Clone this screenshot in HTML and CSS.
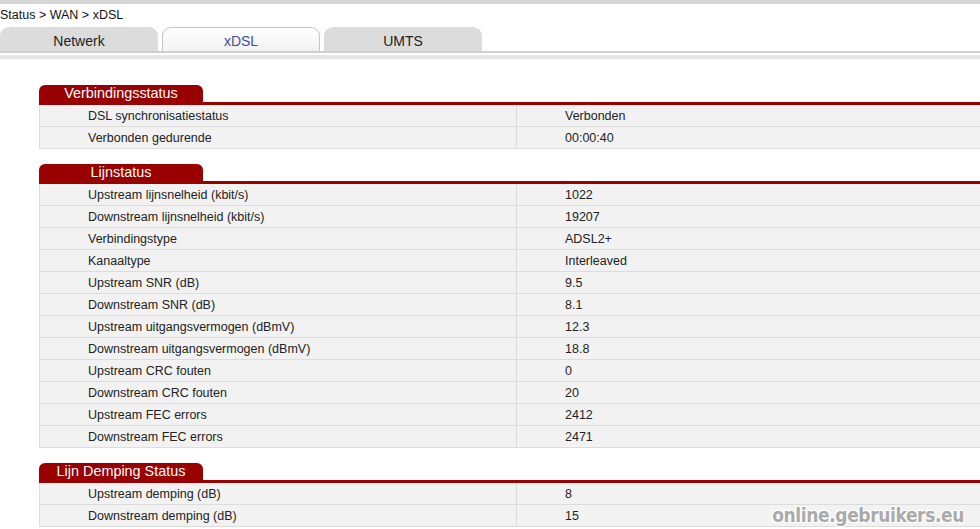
FILE: index.html
```html
<!DOCTYPE html>
<html lang="nl">

<head>
    <meta charset="UTF-8">
    <title>Status - WAN - xDSL</title>
    <link rel="stylesheet" href="styles.css">
</head>

<body>
    <div class="topbar"></div>
    <div class="breadcrumb">Status &gt; WAN &gt; xDSL</div>

    <div class="tabs">
        <div class="tab">Netwerk</div>
        <div class="tab active">xDSL</div>
        <div class="tab">UMTS</div>
    </div>
    <div class="tabline"></div>

    <div class="content">
        <div class="section">
            <div class="section-head"><span class="section-title">Verbindingsstatus</span></div>
            <table class="info">
                <tr><td>DSL synchronisatiestatus</td><td>Verbonden</td></tr>
                <tr><td>Verbonden gedurende</td><td>00:00:40</td></tr>
            </table>
        </div>

        <div class="section">
            <div class="section-head"><span class="section-title">Lijnstatus</span></div>
            <table class="info">
                <tr><td>Upstream lijnsnelheid (kbit/s)</td><td>1022</td></tr>
                <tr><td>Downstream lijnsnelheid (kbit/s)</td><td>19207</td></tr>
                <tr><td>Verbindingstype</td><td>ADSL2+</td></tr>
                <tr><td>Kanaaltype</td><td>Interleaved</td></tr>
                <tr><td>Upstream SNR (dB)</td><td>9.5</td></tr>
                <tr><td>Downstream SNR (dB)</td><td>8.1</td></tr>
                <tr><td>Upstream uitgangsvermogen (dBmV)</td><td>12.3</td></tr>
                <tr><td>Downstream uitgangsvermogen (dBmV)</td><td>18.8</td></tr>
                <tr><td>Upstream CRC fouten</td><td>0</td></tr>
                <tr><td>Downstream CRC fouten</td><td>20</td></tr>
                <tr><td>Upstream FEC errors</td><td>2412</td></tr>
                <tr><td>Downstream FEC errors</td><td>2471</td></tr>
            </table>
        </div>

        <div class="section">
            <div class="section-head"><span class="section-title">Lijn Demping Status</span></div>
            <table class="info">
                <tr><td>Upstream demping (dB)</td><td>8</td></tr>
                <tr><td>Downstream demping (dB)</td><td>15</td></tr>
            </table>
        </div>
    </div>

    <div class="watermark">online.gebruikers.eu</div>
</body>

</html>
```

FILE: styles.css
```css
html,
body {
    overflow: hidden;
}

body {
    margin: 0;
    padding: 0;
    font-family: 'Liberation Sans', Arial, sans-serif;
    font-size: 12.5px;
    color: #222;
    background-color: #fff;
    width: 980px;
    height: 529px;
    position: relative;
}

.topbar {
    height: 4px;
    background-color: #d6d6d6;
}

.breadcrumb {
    height: 22px;
    line-height: 20px;
    padding-top: 1px;
    font-size: 12.5px;
    color: #111;
}

/* tabs */
.tabs {
    display: flex;
    gap: 4px;
    height: 24px;
}

.tab {
    width: 158px;
    height: 24px;
    line-height: 28px;
    text-align: center;
    font-size: 14px;
    color: #222;
    background-color: #dcdcdc;
    border-radius: 9px 9px 0 0;
    box-sizing: border-box;
}

.tab.active {
    background: linear-gradient(#ffffff, #f2f2f2);
    border: 1px solid #c4c4c4;
    border-bottom: none;
    color: #3a4fa0;
    line-height: 27px;
}

.tabline {
    height: 2px;
    background-color: #cfcfcf;
    border-bottom: 2px solid #fff;
    box-shadow: 0 4px 0 #e6e6e6;
    margin-bottom: 4px;
}

/* sections */
.content {
    margin-left: 39px;
    width: 980px;
    padding-top: 26px;
}

.section {
    margin-bottom: 15px;
}

.section-head {
    height: 17px;
    border-bottom: 3px solid #990000;
}

.section-title {
    display: block;
    width: 164px;
    height: 17px;
    line-height: 17px;
    background-color: #990000;
    color: #fff;
    font-size: 14.4px;
    text-align: center;
    border-radius: 6px 6px 0 0;
}

.info {
    width: 100%;
    border-collapse: collapse;
    table-layout: fixed;
}

.info td {
    height: 20px;
    padding: 1px 0 0 48px;
    background-color: #f2f2f2;
    border-bottom: 1px solid #dcdcdc;
    border-left: 1px solid #dcdcdc;
    line-height: 20px;
    white-space: nowrap;
}

.info td:first-child {
    width: 428px;
}

.watermark {
    position: absolute;
    right: 16px;
    bottom: 3px;
    font-family: 'DejaVu Sans Condensed', 'Roboto', sans-serif;
    font-weight: bold;
    font-size: 19px;
    letter-spacing: -0.4px;
    color: #aaaaaa;
    text-shadow: 1px 1px 0 #fff, -1px -1px 0 #fff, 1px -1px 0 #fff, -1px 1px 0 #fff, 0 0 2px #fff;
}
```
